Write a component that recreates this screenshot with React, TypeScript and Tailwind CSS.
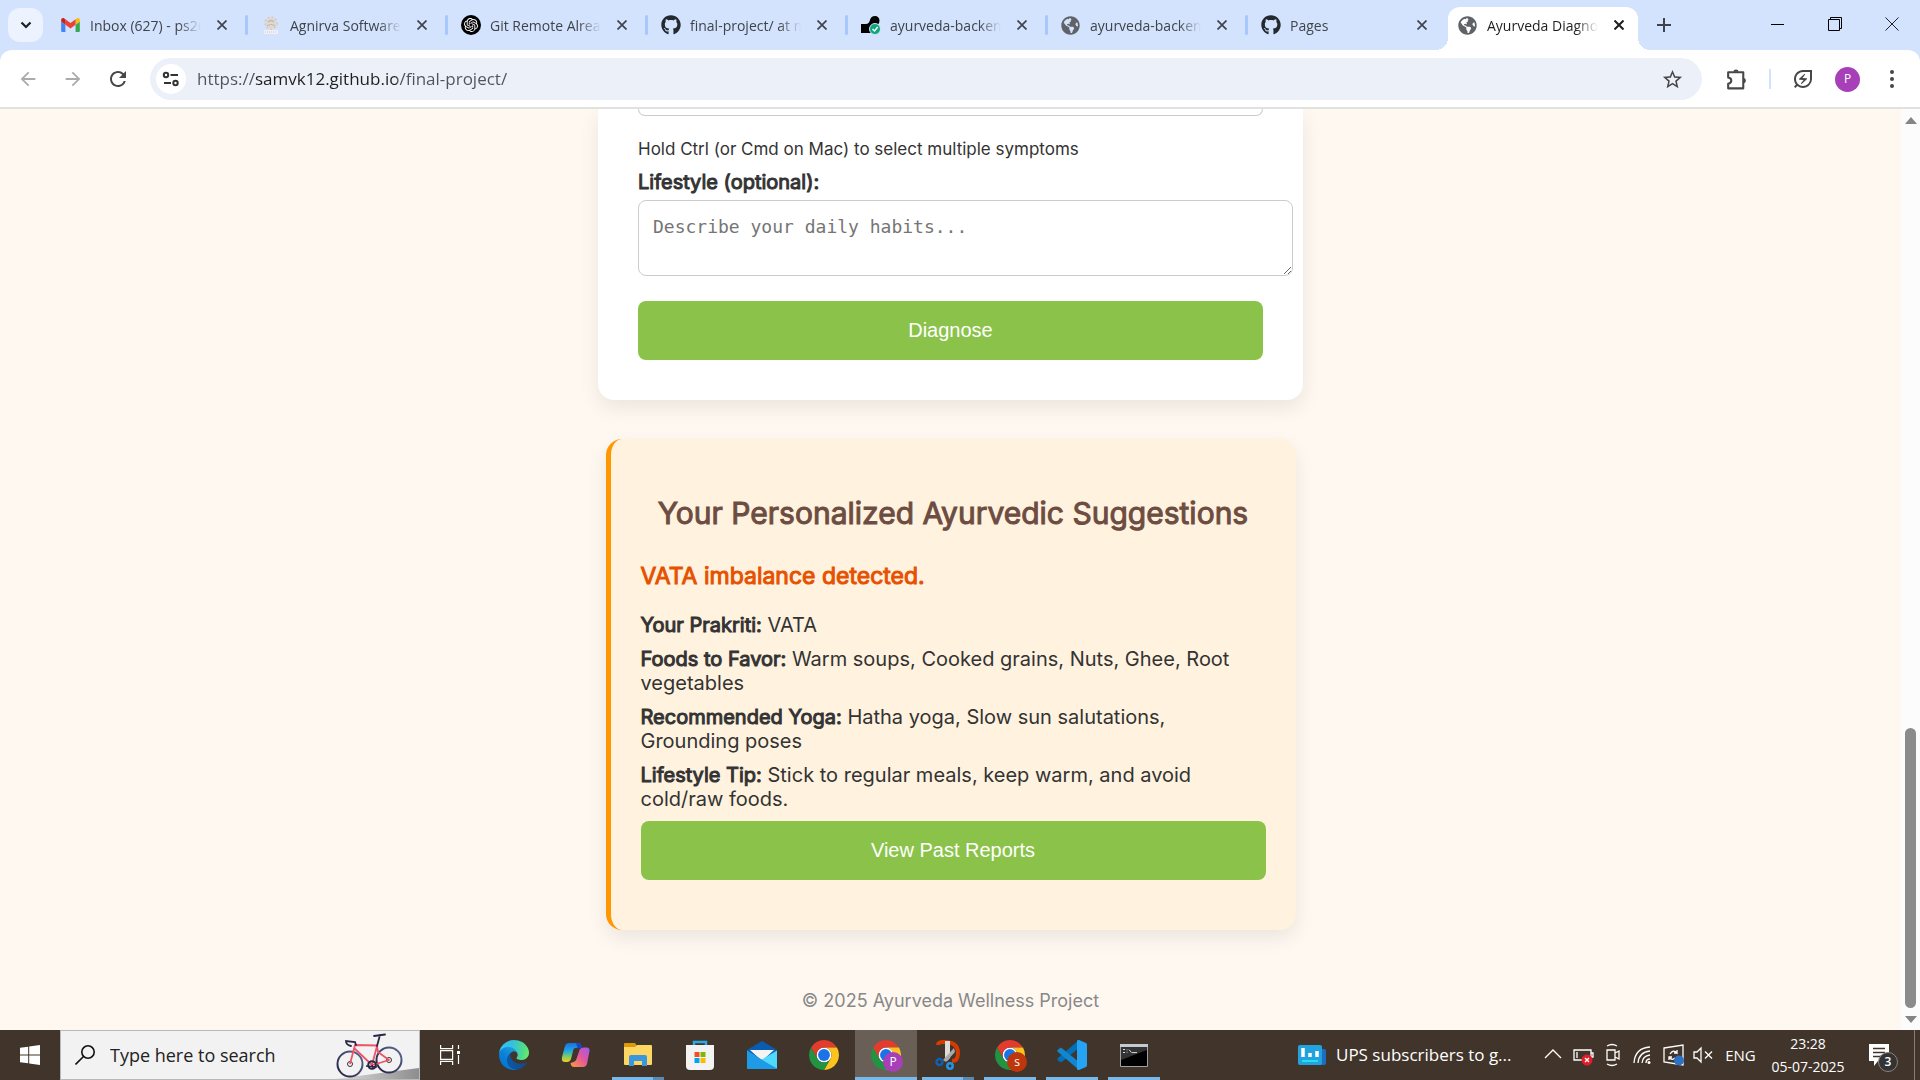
import type { ReactNode } from "react";
import { FaGithub, FaGlobeAmericas } from "react-icons/fa";
import {
  MdArrowBack,
  MdArrowForward,
  MdOutlineEnergySavingsLeaf,
  MdRefresh,
  MdStarBorder,
} from "react-icons/md";
import { SiOpenai } from "react-icons/si";

/* ---------- Browser icons ---------- */

const Gmail = () => (
  <svg viewBox="52 42 88 66" className="h-[14px] w-[19px]">
    <path fill="#4285f4" d="M58 108h14V74L52 59v43c0 3.32 2.69 6 6 6" />
    <path fill="#34a853" d="M120 108h14c3.32 0 6-2.69 6-6V59l-20 15" />
    <path fill="#fbbc04" d="M120 48v26l20-15v-8c0-7.42-8.47-11.65-14.4-7.2" />
    <path fill="#ea4335" d="M72 74V48l24 18 24-18v26L96 92" />
    <path fill="#c5221f" d="M52 51v8l20 15V48l-5.600-4.200c-5.940-4.450-14.400-.22-14.400 7.200" />
  </svg>
);

const Emblem = () => (
  <svg viewBox="0 0 20 20" className="size-5" fill="none" stroke="#d6c8bc">
    <circle cx="10" cy="8" r="5.500" fill="#dfd9d6" stroke="none" />
    <circle cx="10" cy="8" r="6" strokeWidth="1.500" strokeDasharray="2 2" />
    <path d="M7 7q3-3 6 0M6 11q4-3 8 0" strokeWidth="1.200" stroke="#c9b49f" />
    <path d="M3 17h14" stroke="#eef0f7" strokeWidth="4" />
    <path d="M4 17h12" strokeWidth="1" strokeDasharray="1 1" />
  </svg>
);

const ChatMark = () => (
  <span className="flex size-5 items-center justify-center rounded-full bg-black text-white">
    <SiOpenai size={14} />
  </span>
);

const RenderMark = () => (
  <svg viewBox="0 0 20 20" className="size-5">
    <path d="M0 18V9h5q3 0 4-4 1-4 5-4t4.500 4.500Q18.500 10 13 11v7z" fill="#000" />
    <circle cx="14" cy="14" r="5.500" fill="#0ca678" stroke="#d3e3fd" strokeWidth="1" />
    <path d="m11.500 14 2 2 3.200-4" fill="none" stroke="#fff" strokeWidth="1.500" />
  </svg>
);

const Cross = ({ bold = false }: { bold?: boolean }) => (
  <svg viewBox="0 0 10 10" className="size-[10px]" fill="none" stroke={bold ? "#1f1f1f" : "#40434a"} strokeWidth={bold ? 2 : 1.700}>
    <path d="m.5.5 9 9m0-9-9 9" />
  </svg>
);

const Puzzle = () => (
  <svg viewBox="0 0 24 24" className="size-[25px]" fill="none" stroke="#474747" strokeWidth="2" strokeLinejoin="round">
    <path d="M4 5h14.500v15.500H4v-4.500q3-.5 3-3t-3-3z" />
    <path d="M9 4.500a2.500 2 0 0 1 5 0zM19 10.500a2 2.500 0 0 1 0 5z" fill="#474747" stroke="none" />
  </svg>
);

const Tune = () => (
  <svg viewBox="0 0 18 16" className="h-4 w-[18px]" fill="none" stroke="#333" strokeWidth="2">
    <circle cx="4" cy="4" r="2.200" />
    <path d="M8.500 4H16M2 12h7" />
    <circle cx="13.500" cy="12" r="2.200" />
  </svg>
);

/* ---------- Taskbar icons ---------- */

const Bike = () => (
  <svg viewBox="0 0 84 48" className="h-12 w-[84px]" fill="none">
    <defs>
      <linearGradient id="floor" x1="0" x2="1">
        <stop offset="0" stopColor="#dedede" />
        <stop offset="1" stopColor="#8d8d8d" />
      </linearGradient>
      <linearGradient id="tyre" x1="0" y1="1" x2="1" y2="0">
        <stop offset="0" stopColor="#231d3f" />
        <stop offset="1" stopColor="#5b6a92" />
      </linearGradient>
    </defs>
    <path d="M0 48 84 37v11z" fill="url(#floor)" />
    <circle cx="15" cy="33" r="12.500" stroke="url(#tyre)" strokeWidth="2" />
    <circle cx="54" cy="29" r="12.500" stroke="url(#tyre)" strokeWidth="2" />
    <circle cx="15" cy="33" r="2.500" stroke="#333" />
    <circle cx="54" cy="29" r="2.500" stroke="#333" />
    <path d="m15 33 5-19 22 .5M19 17l18 17 5-19 1 6 11 8-16 5" stroke="#ee5468" strokeWidth="1.800" strokeLinejoin="round" />
    <path d="m42 15 3-11m-6 1 11-1.500M21 14l-1-3-9-1q0 4 5 5" stroke="#2b2747" strokeWidth="1.800" strokeLinecap="round" />
    <circle cx="37" cy="34" r="3.800" stroke="#2b2747" strokeWidth="2" />
    <path d="m31 35 11 1m-5-2 1 4" stroke="#2b2747" strokeWidth="1.500" />
  </svg>
);

const TaskView = () => (
  <svg viewBox="0 0 21 20" className="h-5 w-[21px]" fill="none" stroke="#fff" strokeWidth="1.200">
    <path d="M.6 0v3.600h12V0M.6 20v-3.600h12V20M.6 5.600h12v8.800H.6zM18.500 0v4M18.500 10v9" />
    <path d="M17 6h3v3h-3z" fill="#fff" stroke="none" />
  </svg>
);

const Edge = () => (
  <svg viewBox="0 0 256 256" className="size-[30px]">
    <defs>
      <linearGradient id="e1" x1="63" x2="242" y1="178" y2="178" gradientUnits="userSpaceOnUse">
        <stop stopColor="#0c59a4" />
        <stop offset="1" stopColor="#114a8b" />
      </linearGradient>
      <linearGradient id="e2" x1="157" x2="46" y1="102" y2="223" gradientUnits="userSpaceOnUse">
        <stop stopColor="#1b9de2" />
        <stop offset=".6" stopColor="#0c7fd6" />
        <stop offset="1" stopColor="#0078d4" />
      </linearGradient>
      <linearGradient id="e3" x1="10" x2="250" y1="60" y2="110" gradientUnits="userSpaceOnUse">
        <stop stopColor="#35c1f1" />
        <stop offset=".4" stopColor="#34c1de" />
        <stop offset=".8" stopColor="#4fd98a" />
        <stop offset="1" stopColor="#66eb6e" />
      </linearGradient>
    </defs>
    <path fill="url(#e1)" d="M231 190.500c-3.400 1.800-6.900 3.400-10.500 4.700a101.500 101.500 0 0 1-35.900 6.500c-47.300 0-88.500-32.500-88.500-74.300a31.500 31.500 0 0 1 16.400-27.300c-42.800 1.800-53.800 46.400-53.800 72.500 0 74 68.100 81.400 82.800 81.400 7.900 0 19.800-2.300 27-4.600l1.300-.4a128.300 128.300 0 0 0 66.600-52.800 4 4 0 0 0-5.400-5.700z" />
    <path fill="url(#e2)" d="M105.700 241.400a79.200 79.200 0 0 1-22.700-21.300 80.700 80.700 0 0 1 29.500-120c3.200-1.500 8.500-4.100 15.600-4a32.400 32.400 0 0 1 25.700 13 31.900 31.900 0 0 1 6.300 18.700c0-.2 24.500-79.600-80-79.600-43.900 0-80 41.600-80 78.200a130.200 130.200 0 0 0 12.100 56 128 128 0 0 0 156.400 67 75.500 75.500 0 0 1-62.800-8z" />
    <path fill="url(#e3)" d="M152.300 148.900c-.9 1-3.400 2.500-3.400 5.600 0 2.600 1.700 5.200 4.800 7.300 14.300 10 41.400 8.600 41.500 8.600 10.700 0 21.100-2.900 30.300-8.300A61.400 61.400 0 0 0 256 109.400c.3-22.400-8-37.300-11.300-43.900C223.500 23.900 177.700 0 128 0A128 128 0 0 0 0 126.200c.5-36.500 36.800-66 80-66 3.500 0 23.500.3 42 10a72.600 72.600 0 0 1 30.900 29.300c6.100 10.600 7.200 24.100 7.200 29.500s-2.700 13.300-7.800 19.900z" />
  </svg>
);

const Copilot = () => (
  <svg viewBox="0 0 30 26" className="h-[26px] w-[30px]">
    <defs>
      <linearGradient id="c1" x1="0" y1="0" x2="0" y2="1">
        <stop offset="0" stopColor="#1c6fe0" />
        <stop offset=".4" stopColor="#1aa7e8" />
        <stop offset=".7" stopColor="#7ccb6a" />
        <stop offset="1" stopColor="#f2cf1f" />
      </linearGradient>
      <linearGradient id="c2" x1="1" y1="0" x2="0" y2="1">
        <stop offset="0" stopColor="#9b5bf0" />
        <stop offset=".45" stopColor="#e2559f" />
        <stop offset="1" stopColor="#ff9a3d" />
      </linearGradient>
    </defs>
    <path d="M8 1h9q3 0 3.500 4l-6 1q-2 0-2.500 3l-2 8q-1 3-4 3H4q-4 0-3-5L4 4q1-3 4-3z" fill="url(#c1)" />
    <path d="M22 25h-9q-3 0-3.500-4l3-1q2 0 3-3l3-9q.8-2.500 4-2.500h3q4 0 2.800 4.500L26 22q-1 3-4 3z" fill="url(#c2)" />
    <path d="M17 1q3 0 4.500 5L17 6.500l-2-5z" fill="#1747c4" />
  </svg>
);

const Explorer = () => (
  <svg viewBox="0 0 28 24" className="h-6 w-7">
    <path d="M0 1q0-1 1-1h10l2 3v3H0z" fill="#dd9a08" />
    <path d="M0 4h11l2-2h14q1 0 1 1v18q0 1-1 1H1q-1 0-1-1z" fill="#fdd663" />
    <path d="M5 23V14q0-2 2-2h14q2 0 2 2v9h-5v-5h-8v5z" fill="#3a96dd" />
  </svg>
);

const Store = () => (
  <svg viewBox="0 0 30 30" className="size-[30px]">
    <path d="M9 7V2h12v5" fill="none" stroke="#2aa9e8" strokeWidth="2.500" />
    <path d="M1 5h28v21q0 4-4 4H5q-4 0-4-4z" fill="#f3f3f3" />
    <path d="M9.500 12h5v5h-5z" fill="#f25022" />
    <path d="M15.500 12h5v5h-5z" fill="#7fba00" />
    <path d="M9.500 18h5v5h-5z" fill="#00a4ef" />
    <path d="M15.500 18h5v5h-5z" fill="#ffb900" />
  </svg>
);

const Mail = () => (
  <svg viewBox="0 0 30 28" className="h-7 w-[30px]">
    <path d="M0 9 15 0l15 9v6H0z" fill="#0a5cb0" />
    <path d="M3 9h24L15 20z" fill="#f4f4f4" />
    <path d="M0 9.500 15 19 30 9.500V27q0 1-1 1H1q-1 0-1-1z" fill="#1490df" />
    <path d="M30 9.500 14 19l16 8.500z" fill="#50d9ff" />
    <path d="M0 9.500 30 28H1q-1 0-1-1z" fill="#1e9be6" />
  </svg>
);

const Chrome = ({ badge, badgeColor }: { badge?: string; badgeColor?: string }) => (
  <span className="relative flex">
    <svg viewBox="0 0 48 48" className="size-[30px]">
      <circle cx="24" cy="24" r="12" fill="#fff" />
      <path d="M24 12H44.780A24 24 0 0 0 3.220 12L13.610 30A12 12 0 0 1 24 12Z" fill="#e33b2e" />
      <path d="M34.390 30 24 48A24 24 0 0 0 44.780 12H24A12 12 0 0 1 34.390 30Z" fill="#fcc31e" />
      <path d="M13.610 30 3.220 12A24 24 0 0 0 24 48L34.390 30A12 12 0 0 1 13.610 30Z" fill="#229342" />
      <circle cx="24" cy="24" r="9.500" fill="#1a73e8" />
    </svg>
    {badge && (
      <span
        className="absolute -right-0.5 -bottom-0.5 flex size-5 items-center justify-center rounded-full text-xs text-white"
        style={{ backgroundColor: badgeColor }}
      >
        {badge}
      </span>
    )}
  </span>
);

const Snip = () => (
  <svg viewBox="0 0 26 30" className="h-[30px] w-[26px]" fill="none">
    <path d="M3 5q0-3 6-3 14 0 14 11 0 8-6 8" stroke="#d83b01" strokeWidth="4" />
    <path d="M10 1h5v17l-3 3-2-3z" fill="#dcdcdc" />
    <path d="m19 8 1 4-9 10-3-2z" fill="#a9a9a9" />
    <circle cx="4.500" cy="22" r="3" stroke="#0f5fb4" strokeWidth="2.500" />
    <circle cx="15" cy="26" r="2.700" stroke="#2196e3" strokeWidth="2.500" />
  </svg>
);

const Code = () => (
  <svg viewBox="0 0 30 30" className="size-[30px]">
    <path d="M22 0v8L4 22.500l-3-2q-1.300-1 0-2.500z" fill="#0070b8" />
    <path d="M22 30v-8L4 7.500l-3 2q-1.300 1 0 2.500z" fill="#1187d1" />
    <path d="m22 0 7 3q1 .5 1 2v20q0 1.500-1 2l-7 3q-1.500.3-2-1V1q.5-1.300 2-1z" fill="#27a3f3" />
  </svg>
);

const Terminal = () => (
  <svg viewBox="0 0 28 23" className="h-[23px] w-7">
    <path d="M.5.5h27v22H.5z" fill="#000" stroke="#9aa3ab" />
    <path d="M0 0h28v3H0z" fill="#c3cad0" />
    <path d="M1 3h26v3L1 16z" fill="#333" />
    <path d="M3 5.500h2m-2 3h2m2-3v.8m0 1.500v.8m2-3 2.500 3m.5 0h5" stroke="#ddd" fill="none" />
  </svg>
);

const News = () => (
  <svg viewBox="0 0 28 20" className="h-5 w-7">
    <path d="M22 4h4q2 0 2 2v12q0 2-2 2h-6z" fill="#1a6fc4" />
    <rect width="24" height="20" rx="2" fill="#22a3df" />
    <path d="M5 3v9m7-4v4m7-6v6" stroke="#fff" strokeWidth="3.500" />
    <path d="M4 16h16" stroke="#27dcf5" strokeWidth="2" />
  </svg>
);

/* ---------- Data ---------- */

const globe = <FaGlobeAmericas size={19} color="#5f6368" />;
const github = <FaGithub size={20} color="#24292f" />;

const tabs: { title: string; icon: ReactNode }[] = [
  { title: "Inbox (627) - ps2603", icon: <Gmail /> },
  { title: "Agnirva Software", icon: <Emblem /> },
  { title: "Git Remote Already", icon: <ChatMark /> },
  { title: "final-project/ at main", icon: github },
  { title: "ayurveda-backend", icon: <RenderMark /> },
  { title: "ayurveda-backend", icon: globe },
  { title: "Pages", icon: github },
  { title: "Ayurveda Diagnosis", icon: globe },
];

const suggestions = [
  ["Your Prakriti:", "VATA"],
  ["Foods to Favor:", "Warm soups, Cooked grains, Nuts, Ghee, Root vegetables"],
  ["Recommended Yoga:", "Hatha yoga, Slow sun salutations, Grounding poses"],
  ["Lifestyle Tip:", "Stick to regular meals, keep warm, and avoid cold/raw foods."],
];

const apps: { name: string; icon: ReactNode; open?: boolean; active?: boolean; stacked?: boolean }[] = [
  { name: "Edge", icon: <Edge /> },
  { name: "Copilot", icon: <Copilot /> },
  { name: "File Explorer", icon: <Explorer />, open: true, stacked: true },
  { name: "Store", icon: <Store /> },
  { name: "Mail", icon: <Mail /> },
  { name: "Chrome", icon: <Chrome /> },
  { name: "Chrome, profile P", icon: <Chrome badge="P" badgeColor="#a63fb8" />, active: true },
  { name: "Snipping Tool", icon: <Snip />, open: true, stacked: true },
  { name: "Chrome, profile S", icon: <Chrome badge="s" badgeColor="#bf360c" />, open: true },
  { name: "VS Code", icon: <Code />, open: true },
  { name: "Command Prompt", icon: <Terminal />, open: true },
];

const tray: { name: string; icon: ReactNode }[] = [
  { name: "Show hidden icons", icon: <path d="m4 15 8-8 8 8" /> },
  {
    name: "Battery",
    icon: (
      <>
        <path d="M3 7h17v10H3zM20 10h2v4h-2M6 9v6" />
        <circle cx="16" cy="17" r="5.500" fill="#e01e2b" stroke="none" />
        <path d="m14 15 4 4m0-4-4 4" />
      </>
    ),
  },
  { name: "Camera", icon: <path d="M6 7h8v10H6zM14 10l4-2v8l-4-2M6 3q5-3 10 0M6 21q5 3 10 0" /> },
  {
    name: "Wi-Fi",
    icon: (
      <>
        <path d="M3 20Q4 5 19 4M7 20q1-11 12-12M11 20q.5-7 8-8M15 20q0-4 4-4" />
        <circle cx="18" cy="19.500" r="1.500" fill="#fff" stroke="none" />
      </>
    ),
  },
  {
    name: "Windows Update",
    icon: (
      <>
        <path d="M3 5 22 2v20L3 19zM9 11q3-5 7-1v-3m0 3h-3M8 17v-3h3m-3 0q3 4 6 1" />
        <circle cx="18" cy="17.500" r="5" fill="#2d72c4" stroke="none" />
      </>
    ),
  },
  { name: "Muted", icon: <path d="M3 9h3l4-4v14l-4-4H3zM14 8.500l7 7m0-7-7 7" /> },
];

/* ---------- Browser chrome ---------- */

const chromeFont = "font-['Open_Sans','Noto_Sans',sans-serif]";

function TabStrip() {
  return (
    <div className="flex h-[50px] shrink-0 bg-[#d3e3fd] pl-2 text-[14px] text-[#40434a]">
      <button aria-label="Search tabs" className="mt-2 mr-[5px] flex h-[34px] w-[35px] items-center justify-center rounded-xl bg-[#ecf2fe]">
        <svg viewBox="0 0 12 8" className="h-2 w-3" fill="none" stroke="#1f1f1f" strokeWidth="2.200">
          <path d="m1.500 1.500 4.500 4.500 4.500-4.500" />
        </svg>
      </button>
      {tabs.map((tab, i) => {
        const active = i === tabs.length - 1;
        return (
          <div
            key={i}
            className={
              active
                ? "relative mt-[7px] flex h-[43px] w-[190px] items-center rounded-t-xl bg-white pb-[7px] pl-2.5 text-[#1f1f1f]"
                : "flex w-[200px] items-center pl-[13px]"
            }
          >
            {active && (
              <>
                <span className="absolute bottom-0 -left-3 size-3 bg-[radial-gradient(circle_at_0_0,transparent_12px,white_12px)]" />
                <span className="absolute -right-3 bottom-0 size-3 bg-[radial-gradient(circle_at_100%_0,transparent_12px,white_12px)]" />
              </>
            )}
            <button className="flex min-w-0 flex-1 items-center gap-[9px] text-left">
              <span className="flex w-5 shrink-0 items-center">{tab.icon}</span>
              <span className="min-w-0 flex-1 overflow-hidden whitespace-nowrap [mask-image:linear-gradient(to_right,black_80%,transparent)]">
                {tab.title}
              </span>
            </button>
            <button aria-label={`Close ${tab.title}`} className={active ? "mr-[14px] ml-4 shrink-0" : "mr-[18px] ml-4 shrink-0"}>
              <Cross bold={active} />
            </button>
            {!active && <span className={i < 6 ? "h-5 w-[3px] rounded bg-[#a8c7fa]" : "h-5 w-[3px]"} />}
          </div>
        );
      })}
      <button aria-label="New tab" className="ml-[19px] flex items-center">
        <svg viewBox="0 0 14 14" className="size-[14px]" stroke="#40434a" strokeWidth="2">
          <path d="M7 0v14M0 7h14" />
        </svg>
      </button>
      <div className="ml-auto flex pb-0.5">
        <button aria-label="Minimize" className="flex w-[57px] items-center justify-center">
          <span className="h-px w-[13px] bg-black" />
        </button>
        <button aria-label="Restore" className="flex w-[57px] items-center justify-center">
          <svg viewBox="0 0 14 14" className="size-[14px]" fill="none" stroke="#000">
            <path d="M.5 2.500h11v11H.5zM2.500 2.500v-2h11v11h-2" />
          </svg>
        </button>
        <button aria-label="Close window" className="flex w-[57px] items-center justify-center">
          <svg viewBox="0 0 14 14" className="size-[14px]" fill="none" stroke="#222">
            <path d="m.5.5 13 13m0-13-13 13" />
          </svg>
        </button>
      </div>
    </div>
  );
}

function Toolbar() {
  return (
    <div className="shrink-0 bg-[#d3e3fd]">
      <div className="flex h-[59px] items-center rounded-t-xl border-b-2 border-[#e0e2e0] bg-white pt-px pl-[17px] text-[#474747]">
        <button aria-label="Back" className="mr-[23px] text-[#ababab]"><MdArrowBack size={22} /></button>
        <button aria-label="Forward" className="mr-[22px] text-[#ababab]"><MdArrowForward size={22} /></button>
        <button aria-label="Reload" className="mr-5"><MdRefresh size={24} /></button>
        <div className="flex h-[42px] flex-1 items-center rounded-full bg-[#ecf0f9] pr-[18px] pl-1.5">
          <button aria-label="Site information" className="mr-[11px] flex size-[30px] items-center justify-center rounded-full bg-white">
            <Tune />
          </button>
          <input
            aria-label="Address"
            defaultValue="https://samvk12.github.io/final-project/"
            className="min-w-0 flex-1 bg-[linear-gradient(to_right,#505358_57px,#1f1f1f_57px,#1f1f1f_200px,#505358_200px)] bg-clip-text text-[17px] text-transparent outline-none"
          />
          <button aria-label="Bookmark"><MdStarBorder size={23} /></button>
        </div>
        <button aria-label="Extensions" className="ml-[22px]"><Puzzle /></button>
        <span className="mx-5 h-5 w-0.5 bg-[#d3e3fd]" />
        <button aria-label="Energy saver"><MdOutlineEnergySavingsLeaf size={24} /></button>
        <button aria-label="Profile" className="ml-5 flex size-[25px] items-center justify-center rounded-full bg-[#a63fb8] text-xs text-white">P</button>
        <button aria-label="Menu" className="mr-[26px] ml-[30px]">
          <svg viewBox="0 0 4 18" className="h-[18px] w-1" fill="#474747">
            <circle cx="2" cy="2" r="2" /><circle cx="2" cy="9" r="2" /><circle cx="2" cy="16" r="2" />
          </svg>
        </button>
      </div>
    </div>
  );
}

function Scrollbar() {
  return (
    <div className="flex w-[19px] shrink-0 flex-col items-center bg-[#fcfcfc] pt-2 pb-[7px]" aria-hidden="true">
      <svg viewBox="0 0 12 7" className="h-[7px] w-3" fill="#858585"><path d="M6 0l6 7H0z" /></svg>
      <div className="my-2 flex w-[11px] flex-1 flex-col justify-end">
        <div className="h-[32%] rounded-full bg-[#8b8b8b]" />
      </div>
      <svg viewBox="0 0 12 7" className="h-[7px] w-3" fill="#858585"><path d="M6 7 0 0h12z" /></svg>
    </div>
  );
}

/* ---------- Page ---------- */

const greenButton =
  "h-[59px] w-full rounded-lg bg-[#8bc34a] pb-0.5 font-['Liberation_Sans',Arial,sans-serif] text-[20px] text-white";

function Page() {
  return (
    <main className="min-w-0 flex-1 bg-[#fff8f1] font-[Inter,sans-serif] text-[20px] leading-6 text-[#333]">
      <form className="mx-auto max-w-[705px] rounded-b-2xl bg-white px-10 pb-10 shadow-[0_8px_20px_rgba(0,0,0,0.08)]" onSubmit={(e) => e.preventDefault()}>
        <select multiple aria-label="Symptoms" className="block h-[7px] w-full rounded-b-lg border border-t-0 border-[#ccc] bg-white" />
        <small className="mt-[23px] block text-[17px] leading-5">Hold Ctrl (or Cmd on Mac) to select multiple symptoms</small>
        <label htmlFor="lifestyle" className="mt-[11px] block [-webkit-text-stroke:1px]">Lifestyle (optional):</label>
        <textarea
          id="lifestyle"
          rows={2}
          placeholder="Describe your daily habits..."
          className="mt-1.5 box-content block h-[46px] w-full rounded-lg border border-[#ccc] bg-white p-[14px] font-['DejaVu_Sans_Mono',monospace] text-[18px] leading-[23px] placeholder:text-[#757575]"
        />
        <button className={`mt-[25px] block ${greenButton}`}>Diagnose</button>
      </form>

      <section className="mx-auto mt-[39px] max-w-[690px] rounded-2xl border-l-[5px] border-[#ff9800] bg-[#fff2df] px-[30px] pt-14 pb-[50px] shadow-[0_8px_20px_rgba(0,0,0,0.08)]">
        <h2 className="text-center text-[30px] leading-9 text-[#6d4c41] [-webkit-text-stroke:1px]">Your Personalized Ayurvedic Suggestions</h2>
        <h3 className="mt-[31px] text-[23px] leading-7 text-[#e65100] [-webkit-text-stroke:1px]">VATA imbalance detected.</h3>
        <div className="mt-[23px] mb-2.5 flex flex-col gap-2.5">
          {suggestions.map(([label, text]) => (
            <p key={label}>
              <strong className="font-normal [-webkit-text-stroke:1px]">{label}</strong> {text}
            </p>
          ))}
        </div>
        <button className={greenButton}>View Past Reports</button>
      </section>

      <footer className="mt-[59px] text-center text-[18px] text-[#888]">© 2025 Ayurveda Wellness Project</footer>
    </main>
  );
}

/* ---------- Taskbar ---------- */

function Taskbar() {
  return (
    <div className="flex h-[50px] shrink-0 bg-[#41342a] text-white">
      <button aria-label="Start" className="flex w-[60px] items-center justify-center">
        <svg viewBox="0 0 20 20" className="size-5" fill="#fff">
          <path d="M0 2.800 8.200 1.700v7.800H0zM9.200 1.500 20 0v9.500H9.200zM0 10.500h8.200v7.800L0 17.200zM9.200 10.500H20V20L9.200 18.500z" />
        </svg>
      </button>
      <label className="flex w-[360px] items-center border border-[#b9b9b9] bg-[#f2f2f2] pl-[14px]">
        <svg viewBox="0 0 20 20" className="size-5" fill="none" stroke="#111" strokeWidth="1.600">
          <circle cx="13" cy="7" r="6.200" />
          <path d="M8.500 11.500.5 19.500" />
        </svg>
        <input aria-label="Search" placeholder="Type here to search" className="ml-[15px] min-w-0 flex-1 text-[18px] outline-none placeholder:text-[#222]" />
        <Bike />
      </label>
      <button aria-label="Task view" className="mr-[3px] flex w-[60px] items-center justify-center"><TaskView /></button>
      {apps.map((app) => (
        <button
          key={app.name}
          aria-label={app.name}
          className={app.active ? "relative flex w-[62px] items-center justify-center bg-[#6a5f57]" : "relative flex w-[62px] items-center justify-center"}
        >
          {app.icon}
          {app.active && <span className="absolute inset-x-0 bottom-0 h-[3px] bg-[#76b9ed]" />}
          {app.open && (
            <span className="absolute inset-x-[5px] bottom-0 flex h-[3px] bg-[#76b9ed]">
              {app.stacked && <span className="ml-auto w-[11px] bg-[#5a8bb5]" />}
            </span>
          )}
        </button>
      ))}
      <button className="ml-auto flex w-[240px] items-center gap-2.5 text-[17px] whitespace-nowrap">
        <News />
        UPS subscribers to g...
      </button>
      {tray.map((item) => (
        <button key={item.name} aria-label={item.name} className="flex w-[30px] items-center justify-center">
          <svg viewBox="0 0 24 24" className="size-6" fill="none" stroke="#fff" strokeWidth="1.300">{item.icon}</svg>
        </button>
      ))}
      <button className="w-[45px] text-[15px]">ENG</button>
      <button className="flex w-[90px] flex-col items-center justify-center gap-[3px] text-[14px] leading-5">
        <span>23:28</span>
        <span>05-07-2025</span>
      </button>
      <button aria-label="Notifications" className="flex w-[61px] items-center pl-4">
        <span className="relative flex">
          <svg viewBox="0 0 20 22" className="h-[22px] w-5">
            <path d="M0 0h20v17H9l-4 5v-5H0z" fill="#fff" />
            <path d="M4 4.500h12M4 8.500h12M4 12.500h9" stroke="#41342a" strokeWidth="1.300" />
          </svg>
          <span className="absolute top-2 left-[9px] flex size-5 items-center justify-center rounded-full border border-[#8b8580] bg-[#333] text-xs font-semibold">3</span>
        </span>
      </button>
      <span className="w-[6px] border-l border-[#877e76]" />
    </div>
  );
}

export default function App() {
  return (
    <div className={`flex h-screen flex-col overflow-hidden ${chromeFont}`}>
      <TabStrip />
      <Toolbar />
      <div className="flex min-h-0 flex-1 overflow-hidden">
        <Page />
        <Scrollbar />
      </div>
      <Taskbar />
    </div>
  );
}
